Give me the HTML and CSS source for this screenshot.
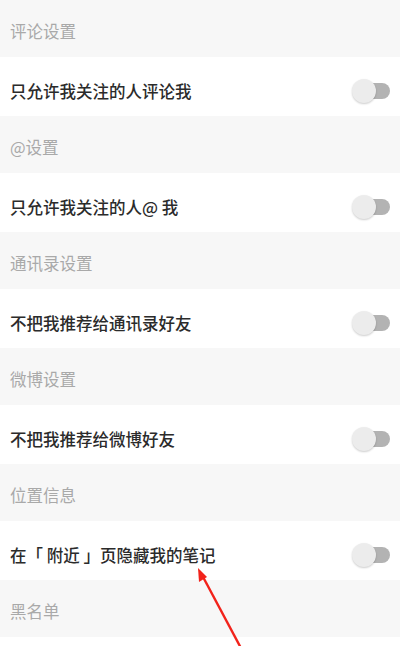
FILE: index.html
```html
<!DOCTYPE html>
<html lang="zh">
<head>
<meta charset="utf-8">
<link rel="stylesheet" href="styles.css">
</head>
<body>
<div class="page">
  <div class="head">评论设置</div>
  <div class="row"><span>只允许我关注的人评论我</span><span class="toggle"><span class="knob"></span></span></div>
  <div class="head">@设置</div>
  <div class="row"><span>只允许我关注的人@ 我</span><span class="toggle"><span class="knob"></span></span></div>
  <div class="head">通讯录设置</div>
  <div class="row"><span>不把我推荐给通讯录好友</span><span class="toggle"><span class="knob"></span></span></div>
  <div class="head">微博设置</div>
  <div class="row"><span>不把我推荐给微博好友</span><span class="toggle"><span class="knob"></span></span></div>
  <div class="head">位置信息</div>
  <div class="row"><span>在「 附近 」页隐藏我的笔记</span><span class="toggle"><span class="knob"></span></span></div>
  <div class="head">黑名单</div>
  <div class="row last"></div>
  <svg class="arrow" width="400" height="646" viewBox="0 0 400 646">
    <line x1="202" y1="575" x2="242" y2="650" stroke="#f2231b" stroke-width="2.4"/>
    <polygon points="198,568 199,582 207,577" fill="#f2231b"/>
  </svg>
</div>
</body>
</html>
```
FILE: styles.css
```css
* { box-sizing: border-box; }
html, body { margin: 0; padding: 0; }
body { background: #f7f7f7; font-family: "Noto Sans CJK SC", "Noto Sans", sans-serif; width: 400px; height: 646px; overflow: hidden; }
.page { position: relative; width: 400px; height: 646px; overflow: hidden; }
.head { height: 57px; display: flex; align-items: center; padding-left: 10px; font-size: 16.5px; color: #a9a9a9; background: #f7f7f7; padding-top: 4px; }
.row { height: 59px; display: flex; align-items: center; justify-content: space-between; padding: 8px 10px 0 10px; background: #fff; font-size: 16.5px; font-weight: 500; color: #2b2b2b; }
.row.last { height: 9px; padding: 0; }
.toggle { position: relative; width: 36px; height: 16px; border-radius: 8px; background: #b3b3b3; }
.knob { position: absolute; left: -2px; top: -4px; width: 24px; height: 24px; border-radius: 50%; background: #ececec; box-shadow: 0 1px 2px rgba(0,0,0,0.2); }
.arrow { position: absolute; left: 0; top: 0; pointer-events: none; }
```
